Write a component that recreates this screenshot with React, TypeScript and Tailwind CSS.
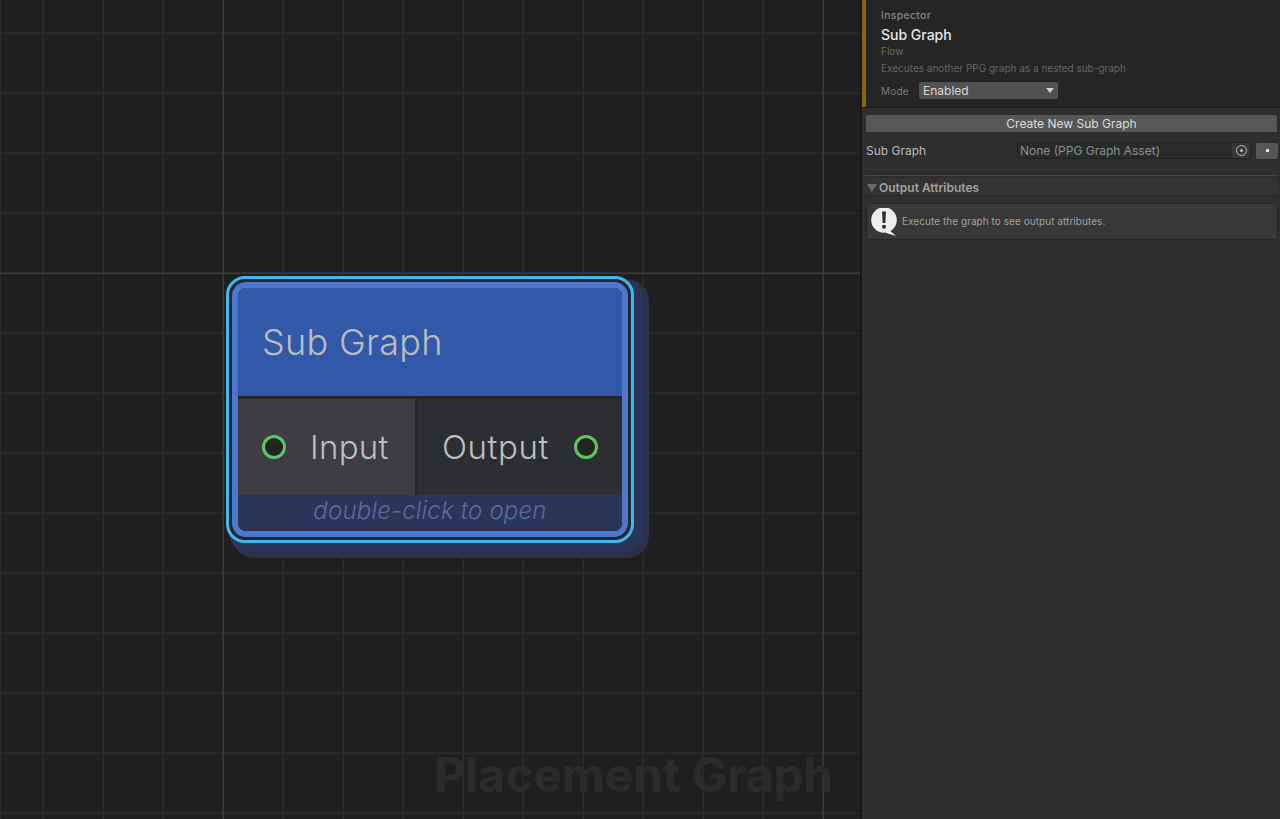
const sans = "font-['Inter','Liberation_Sans',sans-serif]"

const GridLines = () => {
  const xs = [43, 103, 163, 283, 343, 403, 463, 523, 583, 643, 703, 763]
  const ys = [33, 93, 153, 213, 333, 393, 453, 513, 573, 633, 693, 753, 813]
  return (
    <svg className="absolute inset-0" width="860" height="819">
      {xs.map((x) => (
        <rect key={x} x={x - 0.5} y="0" width="1.5" height="819" fill="#2c2c2c" />
      ))}
      {ys.map((y) => (
        <rect key={y} x="0" y={y - 0.5} width="860" height="1.5" fill="#2c2c2c" />
      ))}
      <rect x="0" y="0" width="1" height="819" fill="#2c2c2c" />
      <rect x="222.5" y="0" width="1.5" height="819" fill="#3c3c3c" />
      <rect x="822.5" y="0" width="1.5" height="819" fill="#3c3c3c" />
      <rect x="0" y="272.5" width="860" height="1.5" fill="#3c3c3c" />
    </svg>
  )
}

const Port = () => (
  <span className="block h-[24px] w-[24px] shrink-0 rounded-full border-[3px] border-[#5cc663] bg-[#232323]" />
)

const SubGraphNode = () => {
  return (
    <div className="absolute left-[226px] top-[276px] h-[267px] w-[408px]">
      <div className="absolute left-[6px] top-[3px] h-[279px] w-[417px] rounded-[22px] bg-[#293049]" />
      <div className="absolute left-[3px] top-[3px] h-[273px] w-[414px] rounded-[20px] bg-[#2a3558]" />
      <div className="absolute inset-0 rounded-[19px] border-[3px] border-[#3db8f5] bg-[#25272c] p-[3px]">
        <div className="flex h-full flex-col overflow-hidden rounded-[14px] border-[6px] border-[#4d78d0] bg-[#262626]">
          <div className="flex h-[108px] items-center bg-[#3159a8] pl-[24px] text-[36px] font-light tracking-[0.3px] text-[#bcbdc0]">
            Sub Graph
          </div>
          <div className="mt-[3px] flex h-[96px] text-[33px] font-light text-[#bfbfbf]">
            <div className="flex w-[177px] items-center bg-[#3c3e44] pl-[24px]">
              <Port />
              <span className="ml-[24px] mt-[2px] tracking-[0.3px]">Input</span>
            </div>
            <div className="ml-[3px] flex flex-1 items-center justify-end bg-[#2d2e33] pr-[24px]">
              <span className="mr-[25px] mt-[2px] tracking-[0.6px]">Output</span>
              <Port />
            </div>
          </div>
          <div className="flex h-[36px] items-center justify-center bg-[#2a3558] pb-[4px] text-[24px] font-light italic tracking-[0.2px] text-[#586c9a]">
            double-click to open
          </div>
        </div>
      </div>
    </div>
  )
}

const InfoIcon = () => (
  <svg width="28" height="28" viewBox="0 0 28 28" className="shrink-0">
    <circle cx="13" cy="12" r="12.8" fill="#ededed" />
    <path d="M17 21 L25 28 L15 25 Z" fill="#ededed" />
    <path d="M11 3.5 h4 l-0.6 11.5 h-2.8 Z" fill="#333" />
    <circle cx="13" cy="18.8" r="2" fill="#333" />
  </svg>
)

const Inspector = () => {
  return (
    <aside className="flex h-full w-[420px] flex-col border-l-2 border-[#171717] bg-[#2e2e2e] text-[#c4c4c4]">
      <div className="h-[108px] border-b border-[#1b1b1b] bg-[#252525]">
        <div className="flex h-full flex-col border-l-4 border-[#8a6414] pl-[15px] pt-[9px]">
          <div className="text-[10.5px] font-medium leading-[14px] tracking-[0.3px] text-[#858585]">Inspector</div>
          <div className="mt-[3px] text-[14px] font-medium leading-[18px] text-[#e6e6e6]">Sub Graph</div>
          <div className="text-[10px] leading-[14px] text-[#6a6a6a]">Flow</div>
          <div className="mt-[3px] text-[10px] leading-[14px] text-[#666666]">
            Executes another PPG graph as a nested sub-graph
          </div>
          <div className="mt-[7px] flex items-center">
            <span className="w-[38px] pt-[2px] text-[10px] tracking-[0.2px] text-[#7a7a7a]">Mode</span>
            <div className="flex h-[17px] w-[139px] items-center justify-between rounded-[2px] bg-[#515151] pl-[4px] pr-[4px] text-[12px] text-[#d8d8d8]">
              Enabled
              <span className="h-0 w-0 border-x-[4px] border-t-[5px] border-x-transparent border-t-[#d0d0d0]" />
            </div>
          </div>
        </div>
      </div>
      <div className="flex flex-col pl-[4px] pr-[2px] pt-[7px]">
        <button className="mr-[1px] h-[17px] rounded-[2px] bg-[#575757] text-[12px] leading-[17px] text-[#dcdcdc]">
          Create New Sub Graph
        </button>
        <div className="mt-[10px] flex h-[17px] items-center">
          <span className="w-[151px] text-[12px] text-[#b8b8b8]">Sub Graph</span>
          <div className="flex h-[17px] w-[234px] items-center justify-between rounded-[3px] border border-[#212121] bg-[#2a2a2a] pl-[2px] text-[12px] text-[#8e8e8e]">
            None (PPG Graph Asset)
            <span className="flex h-full w-[18px] items-center justify-center rounded-r-[3px] bg-[#373737]">
              <span className="flex h-[11px] w-[11px] items-center justify-center rounded-full border border-[#bcbcbc]">
                <span className="h-[3px] w-[3px] rounded-full bg-[#bcbcbc]" />
              </span>
            </span>
          </div>
          <div className="ml-[5px] flex h-[16px] w-[22px] items-center justify-center rounded-[2px] bg-[#565656]">
            <span className="h-[3px] w-[3px] bg-[#e0e0e0]" />
          </div>
        </div>
        <div className="-ml-[1px] mt-[16px] h-px bg-[#464646]" />
        <div className="-ml-[1px] mt-[2px] flex h-[18px] items-center border-b border-[#262626] bg-[#333333] pt-[2px]">
          <span className="ml-[2px] h-0 w-0 border-x-[5px] border-t-[8px] border-x-transparent border-t-[#6a6a6a]" />
          <span className="ml-[2px] text-[12px] font-semibold text-[#a0a0a0]">Output Attributes</span>
        </div>
        <div className="mt-[7px] flex h-[37px] items-center rounded-[3px] border border-[#262626] bg-[#383838] pl-[4px]">
          <InfoIcon />
          <span className="ml-[3px] text-[10px] tracking-[0.05px] text-[#a0a0a0]">Execute the graph to see output attributes.</span>
        </div>
      </div>
    </aside>
  )
}

export default function App() {
  return (
    <div className={`${sans} flex h-[819px] w-[1280px] overflow-hidden bg-[#1f1f1f]`}>
      <main className="relative h-full w-[860px] overflow-hidden bg-[#1f1f1f]">
        <GridLines />
        <SubGraphNode />
        <div className="absolute bottom-[15px] right-[27px] text-[47.5px] font-bold leading-[58px] text-[#2b2b2b]">
          Placement Graph
        </div>
      </main>
      <Inspector />
    </div>
  )
}
